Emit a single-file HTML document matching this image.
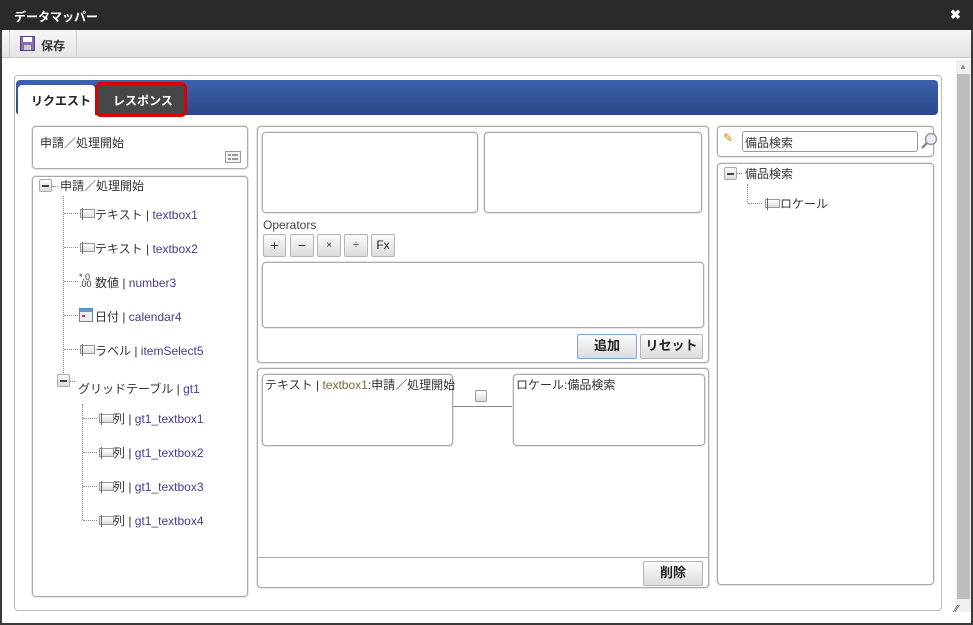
<!DOCTYPE html>
<html><head><meta charset="utf-8"><style>
*{box-sizing:border-box;margin:0;padding:0}
body{width:973px;height:625px;position:relative;overflow:hidden;background:#fff;font-family:"Liberation Sans","Noto Sans CJK JP",sans-serif;font-size:12px;color:#222}
.a{position:absolute}
.box{position:absolute;border:1px solid #aaa;border-radius:4px;background:#fff;box-shadow:0 0 0 1px #e6e6e6}
.btn{position:absolute;border:1px solid #b5b5b5;border-radius:2px;background:linear-gradient(#fbfbfb,#dcdcdc);text-align:center;font-size:12px;color:#222}
.bb{font-weight:bold;font-size:13px;line-height:22px}
.t{position:absolute;white-space:nowrap;font-size:12px;color:#333}
.t span{color:#4a3a8a}
.tb{position:absolute;width:15px;height:9px;border:1px solid #999;background:linear-gradient(#fff,#ddd)}
.tb:before{content:"";position:absolute;left:1px;top:-2px;width:1px;height:12px;background:#666}
.dh{position:absolute;height:0;border-top:1px dotted #888}
.dv{position:absolute;width:0;border-left:1px dotted #888}
.mn{position:absolute;width:13px;height:13px;border:1px solid #aaa;background:linear-gradient(#fafafa,#ddd);border-radius:2px}
.mn:after{content:"";position:absolute;left:2px;top:5px;width:7px;height:2px;background:#444}
</style></head><body>
<div class="a" style="left:0;top:0;width:973px;height:625px;border:2px solid #3a3a3a;border-top:none"></div>
<div class="a" style="left:0;top:0;width:973px;height:30px;background:#2a2a2a"></div>
<div class="t" style="left:14px;top:8px;color:#fff;font-weight:bold;font-size:12px">データマッパー</div>
<div class="t" style="left:950px;top:7px;color:#fff;font-weight:bold;font-size:13px">✖</div>
<div class="a" style="left:2px;top:30px;width:969px;height:28px;background:linear-gradient(#f7f7f7,#e4e4e4);border-bottom:1px solid #c8c8c8"></div>
<div class="a" style="left:9px;top:30px;width:1px;height:28px;background:#ccc"></div>
<div class="a" style="left:76px;top:30px;width:1px;height:28px;background:#ccc"></div>
<svg class="a" style="left:20px;top:36px" width="15" height="15"><rect x="0.5" y="0.5" width="14" height="14" fill="#8a6aa8" stroke="#5a3f7a"/><rect x="3" y="1" width="9" height="5" fill="#fff"/><rect x="4" y="9" width="7" height="5" fill="#ccc"/></svg>
<div class="t" style="left:41px;top:37px;font-weight:bold;font-size:12px">保存</div>
<div class="a" style="left:956px;top:60px;width:15px;height:552px;background:#f0f0f0"></div>
<div class="a" style="left:957px;top:74px;width:13px;height:525px;background:#bdbdbd"></div>
<div class="t" style="left:959px;top:62px;font-size:8px;color:#888">▲</div>
<div class="a" style="left:14px;top:75px;width:928px;height:536px;border:1px solid #bbb;border-radius:4px"></div>
<div class="a" style="left:16px;top:80px;width:922px;height:35px;border-radius:4px;background:linear-gradient(#3b62ad,#2a4888)"></div>
<div class="a" style="left:18px;top:85px;width:77px;height:31px;background:#fff;border-radius:4px 4px 0 0"></div>
<div class="t" style="left:31px;top:92px;font-weight:bold;font-size:12px;color:#222">リクエスト</div>
<div class="a" style="left:95px;top:82px;width:92px;height:35px;border:3px solid #d00;border-radius:6px"></div>
<div class="a" style="left:98px;top:85px;width:86px;height:29px;background:#474747;border-radius:2px"></div>
<div class="t" style="left:113px;top:92px;font-weight:bold;font-size:12px;color:#fff">レスポンス</div>

<div class="box" style="left:32px;top:126px;width:216px;height:43px"></div>
<div class="t" style="left:40px;top:134px">申請／処理開始</div>
<svg class="a" style="left:225px;top:151px" width="16" height="12"><rect x="0.5" y="0.5" width="15" height="11" fill="#f3f3f3" stroke="#999"/><rect x="3" y="3" width="3" height="2" fill="#999"/><rect x="7" y="3" width="6" height="2" fill="#999"/><rect x="3" y="7" width="3" height="2" fill="#999"/><rect x="7" y="7" width="6" height="2" fill="#999"/></svg>
<div class="box" style="left:32px;top:176px;width:216px;height:421px"></div>
<div class="mn" style="left:39px;top:179px"></div>
<div class="dh" style="left:52px;top:186px;width:6px"></div>
<div class="t" style="left:60px;top:177px">申請／処理開始</div>
<div class="dv" style="left:63px;top:196px;height:185px"></div>
<div class="dh" style="left:64px;top:213px;width:14px"></div><div class="tb" style="left:80px;top:209px"></div><div class="t" style="left:95px;top:206px">テキスト | <span>textbox1</span></div>
<div class="dh" style="left:64px;top:247px;width:14px"></div><div class="tb" style="left:80px;top:243px"></div><div class="t" style="left:95px;top:240px">テキスト | <span>textbox2</span></div>
<div class="dh" style="left:64px;top:281px;width:14px"></div><div class="t" style="left:79px;top:274px;font-size:9px;line-height:7px;color:#335">*.0<br>.00</div><div class="t" style="left:95px;top:274px">数値 | <span>number3</span></div>
<div class="dh" style="left:64px;top:315px;width:14px"></div><svg class="a" style="left:79px;top:307px" width="14" height="15"><rect x="0.5" y="1.5" width="13" height="13" fill="#eee" stroke="#5588bb"/><rect x="1" y="2" width="12" height="3" fill="#5a9ad8"/><rect x="3" y="8" width="3" height="2" fill="#c33"/></svg><div class="t" style="left:95px;top:308px">日付 | <span>calendar4</span></div>
<div class="dh" style="left:64px;top:349px;width:14px"></div><div class="tb" style="left:80px;top:345px"></div><div class="t" style="left:95px;top:342px">ラベル | <span>itemSelect5</span></div>
<div class="mn" style="left:57px;top:374px"></div><div class="dh" style="left:70px;top:381px;width:5px"></div>
<div class="t" style="left:78px;top:380px">グリッドテーブル | <span>gt1</span></div>
<div class="dv" style="left:82px;top:404px;height:116px"></div>
<div class="dh" style="left:83px;top:418px;width:14px"></div><div class="tb" style="left:99px;top:414px"></div><div class="t" style="left:113px;top:410px">列 | <span>gt1_textbox1</span></div>
<div class="dh" style="left:83px;top:452px;width:14px"></div><div class="tb" style="left:99px;top:448px"></div><div class="t" style="left:113px;top:444px">列 | <span>gt1_textbox2</span></div>
<div class="dh" style="left:83px;top:486px;width:14px"></div><div class="tb" style="left:99px;top:482px"></div><div class="t" style="left:113px;top:478px">列 | <span>gt1_textbox3</span></div>
<div class="dh" style="left:83px;top:520px;width:14px"></div><div class="tb" style="left:99px;top:516px"></div><div class="t" style="left:113px;top:512px">列 | <span>gt1_textbox4</span></div>

<div class="box" style="left:257px;top:126px;width:452px;height:237px"></div>
<div class="box" style="left:262px;top:132px;width:216px;height:81px"></div>
<div class="box" style="left:484px;top:132px;width:218px;height:81px"></div>
<div class="t" style="left:263px;top:218px;color:#444">Operators</div>
<div class="btn" style="left:263px;top:234px;width:23px;height:23px;line-height:20px;font-size:14px">+</div>
<div class="btn" style="left:290px;top:234px;width:24px;height:23px;line-height:20px;font-size:14px">−</div>
<div class="btn" style="left:317px;top:234px;width:24px;height:23px;line-height:21px;font-size:10px">×</div>
<div class="btn" style="left:344px;top:234px;width:24px;height:23px;line-height:21px;font-size:11px">÷</div>
<div class="btn" style="left:371px;top:234px;width:24px;height:23px;line-height:21px">Fx</div>
<div class="box" style="left:262px;top:262px;width:442px;height:66px"></div>
<div class="btn bb" style="left:577px;top:334px;width:60px;height:25px;border-color:#7fa6e0">追加</div>
<div class="btn bb" style="left:640px;top:334px;width:63px;height:25px">リセット</div>

<div class="box" style="left:257px;top:368px;width:452px;height:220px"></div>
<div class="box" style="left:262px;top:374px;width:191px;height:72px"></div>
<div class="t" style="left:265px;top:376px">テキスト | <span style="color:#7a6a3a">textbox1</span>:申請／処理開始</div>
<div class="a" style="left:453px;top:406px;width:60px;height:1px;background:#888"></div>
<div class="a" style="left:475px;top:390px;width:12px;height:12px;border:1px solid #999;border-radius:2px;background:linear-gradient(#fff,#ddd)"></div>
<div class="box" style="left:513px;top:374px;width:192px;height:72px"></div>
<div class="t" style="left:516px;top:376px">ロケール:備品検索</div>
<div class="a" style="left:258px;top:557px;width:450px;height:1px;background:#aaa"></div>
<div class="btn bb" style="left:643px;top:561px;width:60px;height:25px">削除</div>

<div class="box" style="left:717px;top:126px;width:217px;height:31px"></div>
<div class="t" style="left:723px;top:131px;font-size:12px;color:#c80">✎</div>
<div class="a" style="left:742px;top:131px;width:176px;height:21px;border:1px solid #999;border-radius:3px;background:#fff"></div>
<div class="t" style="left:745px;top:134px">備品検索</div>
<svg class="a" style="left:921px;top:132px" width="18" height="18"><circle cx="10" cy="7" r="5.5" fill="#e8eef5" stroke="#999" stroke-width="1.5"/><line x1="6" y1="11" x2="1" y2="16" stroke="#888" stroke-width="2.5"/></svg>
<div class="box" style="left:717px;top:163px;width:217px;height:422px"></div>
<div class="mn" style="left:724px;top:167px"></div><div class="dh" style="left:737px;top:173px;width:5px"></div>
<div class="t" style="left:745px;top:165px">備品検索</div>
<div class="dv" style="left:747px;top:184px;height:18px"></div>
<div class="dh" style="left:748px;top:203px;width:14px"></div><div class="tb" style="left:765px;top:199px"></div>
<div class="t" style="left:780px;top:195px">ロケール</div>
<div class="t" style="left:955px;top:604px;font-size:10px;color:#333">⁄⁄</div>
</body></html>
